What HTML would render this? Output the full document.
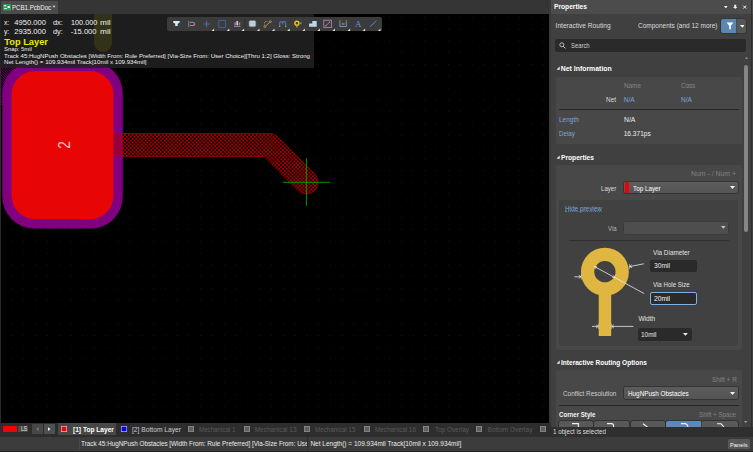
<!DOCTYPE html>
<html lang="en"><head>
<meta charset="utf-8">
<title>PCB1.PcbDoc - Properties</title>
<style>
*{box-sizing:border-box;margin:0;padding:0}
html,body{width:753px;height:452px;overflow:hidden;background:#353535}
body{position:relative;font-family:"Liberation Sans",sans-serif;font-size:6.6px;color:#e4e4e4;line-height:1;-webkit-font-smoothing:antialiased}
.a{position:absolute;white-space:nowrap}
.t{position:absolute;white-space:nowrap;line-height:10px;height:10px}
.r{text-align:right}
.b{font-weight:bold}
.g{color:#8c8c8c}
.bl{color:#7ba7d9}
#canvas{left:0;top:14px;width:548.8px;height:408.5px;background:#000;overflow:hidden}
#hud{left:0;top:0;width:314px;height:53.5px;background:rgba(33,33,33,.87);overflow:hidden}
#tb{left:166.6px;top:16.7px;width:215.5px;height:14.3px;background:#3b3b3b;border-radius:2px}
#panel{left:551px;top:14px;width:202px;height:413.3px;background:#404040;overflow:hidden}
.box{position:absolute;left:4.6px;width:186px;background:#484848;border-radius:2px}
.dd{position:absolute;background:linear-gradient(#5c5c5c,#545454);border-radius:2.5px;border:0.7px solid #343434}
.in{position:absolute;background:#2a2a2a;border-radius:2px}
.sep{position:absolute;height:1px;background:#262626}
.tri{position:absolute;width:0;height:0;border-left:2.5px solid transparent;border-right:2.5px solid transparent;border-top:3px solid #f4f4f4}
.sq{position:absolute;top:3.6px;width:6.2px;height:6.2px;background:#606060;box-shadow:inset 0 0 0 0.8px #8c8c8c}
.lt{position:absolute;top:2.2px;line-height:10px;color:#5a5a5a;font-size:6.5px;white-space:nowrap}
.cb{position:absolute;top:407px;height:8px;background:#595959;border-radius:2px 2px 0 0;box-shadow:0 0 0 0.7px #2c2c2c}
</style>
</head>
<body>

<!-- top document tab bar -->
<div class="a" style="left:0;top:0;width:753px;height:14px;background:#353535"></div>
<div class="a" style="left:1px;top:1px;width:56.5px;height:13px;background:#4b4b4b;border-radius:1px 1px 0 0"></div>
<svg class="a" style="left:3px;top:4px" width="8" height="6.5" viewBox="0 0 8 6.5"><rect width="8" height="6.5" rx="0.8" fill="#2f9e5b"></rect><rect x="1" y="1" width="2.2" height="1.4" fill="#c9f0d6"></rect><rect x="4.6" y="2" width="2.2" height="2" fill="#e8fff0"></rect><rect x="1" y="4" width="3" height="1" fill="#c9f0d6"></rect></svg>
<div class="t" style="left: 12.2px; top: 2.8px; font-size: 6.4px; color: rgb(242, 242, 242); width: auto; text-align: left; transform: scaleX(0.958); transform-origin: 0px 50%;">PCB1.PcbDoc *</div>

<!-- PCB canvas -->
<div id="canvas" class="a">
<svg class="a" style="left:0;top:0" width="548" height="409" viewBox="0 14 548 409">
  <defs>
    <pattern id="grid" patternUnits="userSpaceOnUse" x="-0.2" y="-0.25" width="11.8" height="11.78" patternTransform="translate(11.6,5.4)">
      <rect x="0" y="0" width="1" height="1" fill="#141414"></rect>
    </pattern>
    <pattern id="hatch" patternUnits="userSpaceOnUse" width="3.76" height="3.76" patternTransform="translate(0.05,0.55)">
      <path fill-rule="evenodd" fill="#a60000" d="M0 0h3.76v3.76h-3.76z M0 0h1.78v1.78h-1.78z M1.88 1.88h1.78v1.78h-1.78z"></path>
    </pattern>
    <pattern id="selh" patternUnits="userSpaceOnUse" width="1.85" height="1.85" patternTransform="rotate(45)">
      <rect width="1.85" height="0.7" fill="#800080"></rect>
    </pattern>
  </defs>
  <rect x="0" y="14" width="548" height="409" fill="#000"></rect>
  <rect x="0" y="14" width="548" height="409" fill="url(#grid)"></rect>
  <!-- dim pad above -->
  
  <!-- selection hatch at left -->
  <rect x="0" y="60" width="30" height="45" fill="url(#selh)"></rect>
  <rect x="0" y="14" width="1" height="409" fill="#2a2a2a"></rect>
  <!-- track outline -->
  <path d="M 100 145 L 269.2 145 L 306.4 182.2" fill="none" stroke="#8a0000" stroke-width="23.9" stroke-linecap="round" stroke-linejoin="round"></path>
  <path d="M 100 145 L 269.2 145 L 306.4 182.2" fill="none" stroke="#000" stroke-width="22.7" stroke-linecap="round" stroke-linejoin="round"></path>
  <!-- pad -->
  <rect x="2.3" y="61.7" width="120.5" height="166.9" rx="32" fill="#800080"></rect>
  <!-- track being routed -->
  <path d="M 100 145 L 269.2 145 L 306.4 182.2" fill="none" stroke="url(#hatch)" stroke-width="23.5" stroke-linecap="round" stroke-linejoin="round"></path>
  <rect x="11.6" y="71" width="101.9" height="148.2" rx="23.5" fill="#e80505"></rect>
  <text x="0" y="6.2" transform="translate(63.3,145) rotate(-90) scale(0.8,1)" text-anchor="middle" font-family="Liberation Sans, sans-serif" font-size="17" fill="#f6c4c4">2</text>
  <!-- cursor crosshair -->
  <path d="M282.6 182.3H330.2M306.4 158.4V205.8" stroke="#00a800" stroke-width="0.9" fill="none"></path>
</svg>

<!-- heads-up display -->
<div id="hud" class="a">
  <div class="a" style="left:93.6px;top:-10px;width:18px;height:48px;border-radius:9px;background:#323218"></div>
  <div class="t" style="left: 4.2px; top: 4.2px; font-size: 7.6px; color: rgb(244, 244, 244); word-spacing: 0px; width: auto; text-align: left; transform: scaleX(0.878); transform-origin: 0px 50%;">x:</div>
  <div class="t" style="left: 14.3px; top: 4.2px; font-size: 7.6px; color: rgb(244, 244, 244); width: auto; text-align: left;">4950.000</div>
  <div class="t" style="left: 52.8px; top: 4.2px; font-size: 7.6px; color: rgb(244, 244, 244); width: auto; text-align: left; transform: scaleX(0.976); transform-origin: 0px 50%;">dx:</div>
  <div class="t" style="left: 71.1px; width: auto; top: 4.2px; font-size: 7.6px; color: rgb(244, 244, 244); text-align: left; transform: scaleX(0.958); transform-origin: 0px 50%;">100.000</div>
  <div class="t" style="left: 100.4px; top: 4.2px; font-size: 7.6px; color: rgb(244, 244, 244); width: auto; text-align: left; transform: scaleX(1.092); transform-origin: 0px 50%;">mil</div>
  <div class="t" style="left: 4.2px; top: 12.9px; font-size: 7.6px; color: rgb(244, 244, 244); width: auto; text-align: left; transform: scaleX(0.878); transform-origin: 0px 50%;">y:</div>
  <div class="t" style="left: 14.3px; top: 12.9px; font-size: 7.6px; color: rgb(244, 244, 244); width: auto; text-align: left;">2935.000</div>
  <div class="t" style="left: 52.8px; top: 12.9px; font-size: 7.6px; color: rgb(244, 244, 244); width: auto; text-align: left; transform: scaleX(0.957); transform-origin: 0px 50%;">dy:</div>
  <div class="t" style="left: 70.8px; width: auto; top: 12.9px; font-size: 7.6px; color: rgb(244, 244, 244); text-align: left;">-15.000</div>
  <div class="t" style="left: 100.4px; top: 12.9px; font-size: 7.6px; color: rgb(244, 244, 244); width: auto; text-align: left; transform: scaleX(1.092); transform-origin: 0px 50%;">mil</div>
  <div class="t b" style="left: 4.25px; top: 22.6px; font-size: 9.3px; color: rgb(234, 234, 0); width: auto; text-align: left;">Top Layer</div>
  <div class="t" style="left: 4px; top: 29.8px; font-size: 6.1px; color: rgb(236, 236, 236); width: auto; text-align: left; transform: scaleX(0.969); transform-origin: 0px 50%;">Snap: 5mil</div>
  <div class="t" style="left: 4px; top: 36.7px; font-size: 6.15px; color: rgb(240, 240, 240); width: auto; text-align: left; transform: scaleX(0.985); transform-origin: 0px 50%;">Track 45:HugNPush Obstacles [Width From: Rule Preferred] [Via-Size From: User Choice][Thru 1:2] Gloss: Strong</div>
  <div class="t" style="left: 4px; top: 43.3px; font-size: 6.15px; color: rgb(240, 240, 240); width: auto; text-align: left;">Net Length() = 109.934mil Track[10mil x 109.934mil]</div>
</div>
</div>

<!-- active bar toolbar -->
<div id="tb" class="a"></div>
<svg class="a" style="left:166.5px;top:16px" width="216" height="15.5" viewBox="166.5 16 216 15.5">
  <!-- filter -->
  <path d="M172.7 21h6.5v1.5l-2 1.2v2.4h-2.5v-2.4l-2-1.2z" fill="#d6ebf4"></path>
  <!-- magnet -->
  <path d="M189.4 22.4h3.2a1.55 1.55 0 0 1 1.55 1.55" fill="none" stroke="#5b8bd6" stroke-width="1.2"></path>
  <path d="M194.15 23.95a1.55 1.55 0 0 1-1.55 1.55h-3.2" fill="none" stroke="#e0707a" stroke-width="1.2"></path>
  <path d="M188.2 21.2v5.6" stroke="#b8dcc4" stroke-width="0.7" stroke-dasharray="1 0.5"></path>
  <!-- plus -->
  <path d="M203 24h6.4M206.2 20.8v6.4" stroke="#4c76b6" stroke-width="0.9"></path>
  <!-- selection rect -->
  <rect x="218.3" y="20.6" width="6.6" height="6.8" fill="none" stroke="#4866a0" stroke-width="0.8"></rect>
  <!-- align -->
  <path d="M233.4 26.4h6.6" stroke="#6aa0e0" stroke-width="0.9"></path>
  <rect x="235.9" y="21" width="1.6" height="4.3" fill="#a8d8f0"></rect>
  <rect x="233.9" y="22.4" width="1.5" height="2.9" fill="#e06a6a"></rect><rect x="238.2" y="22.4" width="1.5" height="2.9" fill="#e06a6a"></rect>
  <!-- separator -->
  <path d="M244.5 18.4v10.6" stroke="#2a2a2a" stroke-width="0.8"></path>
  <!-- chip -->
  <rect x="248.8" y="20.8" width="6.2" height="5.8" rx="0.6" fill="#cfe0e6"></rect>
  <path d="M248 22.2h7.8M248 23.7h7.8M248 25.2h7.8M250.6 20v7.4M253.2 20v7.4" stroke="#a9bcc4" stroke-width="0.5"></path>
  <!-- route -->
  <path d="M265.2 26l4.4-4" fill="none" stroke="#7a9ad0" stroke-width="0.9"></path>
  <path d="M264 22.2v3M264.6 21.6h3.4" fill="none" stroke="#d7a52c" stroke-width="0.7" stroke-dasharray="0.8 0.6"></path>
  <circle cx="264.4" cy="26.6" r="1" fill="none" stroke="#d7a52c" stroke-width="0.7"></circle><circle cx="270" cy="21.6" r="0.9" fill="none" stroke="#d7a52c" stroke-width="0.7"></circle>
  <!-- tuning -->
  <path d="M279.2 25.8V23.3a1.5 1.7 0 0 1 3 0v1.2m0-1.2a1.5 1.7 0 0 1 3 0V25.8" fill="none" stroke="#4a78c0" stroke-width="1.1"></path>
  <circle cx="279.2" cy="26.2" r="0.75" fill="#d7a52c"></circle><circle cx="285.2" cy="26.2" r="0.75" fill="#d7a52c"></circle>
  <!-- via/key -->
  <circle cx="296.4" cy="23.3" r="2" fill="none" stroke="#e8c21e" stroke-width="1.5"></circle>
  <path d="M296.4 25.8v1.8" stroke="#e09434" stroke-width="1.2"></path><rect x="299" y="22.4" width="2" height="1.7" fill="#49b04a"></rect>
  <!-- polygon stairs -->
  <path d="M308.6 26.7v-3.3h3.2v-2.4h4.4v5.7z" fill="#bcd9ec"></path>
  <!-- pink square -->
  <rect x="323.3" y="20.2" width="7.6" height="7.4" fill="none" stroke="#b97fbd" stroke-width="0.85"></rect>
  <path d="M325.4 25.6l3.6-3.3" stroke="#6a93cc" stroke-width="0.9"></path><circle cx="325.4" cy="25.7" r="0.7" fill="#d7a52c"></circle><circle cx="329" cy="22.3" r="0.7" fill="#d7a52c"></circle>
  <!-- dimension -->
  <path d="M339.4 21.6v5h6.4v-5" fill="none" stroke="#78aee6" stroke-width="0.8"></path>
  <rect x="341.2" y="22.8" width="2.8" height="2.4" fill="#707070"></rect><circle cx="339.5" cy="20.8" r="0.6" fill="#d7a52c"></circle><circle cx="345.7" cy="20.8" r="0.6" fill="#d7a52c"></circle>
  <!-- A text -->
  <text x="357.7" y="27" text-anchor="middle" font-family="Liberation Serif, serif" font-size="9" fill="#5b98de">A</text>
  <!-- line -->
  <path d="M369.6 26.6l6.2-5.6" stroke="#4d8ad8" stroke-width="1"></path>
  <!-- dropdown corner marks -->
  <g fill="#e8e8e8">
    <path d="M213.6 28.6v2.3h-2.5z"></path><path d="M228.8 28.6v2.3h-2.5z"></path><path d="M243.6 28.6v2.3h-2.5z"></path><path d="M259 28.6v2.3h-2.5z"></path><path d="M274 28.6v2.3h-2.5z"></path><path d="M289.2 28.6v2.3h-2.5z"></path><path d="M304.4 28.6v2.3h-2.5z"></path><path d="M319.4 28.6v2.3h-2.5z"></path><path d="M334.4 28.6v2.3h-2.5z"></path><path d="M349.6 28.6v2.3h-2.5z"></path><path d="M364.6 28.6v2.3h-2.5z"></path><path d="M380 28.6v2.3h-2.5z"></path>
  </g>
</svg>

<!-- splitter + Properties panel header -->
<div class="a" style="left:548.8px;top:0;width:2.4px;height:436.5px;background:#383838"></div>
<div class="a" style="left:551px;top:0;width:202px;height:14px;background:#4c4c4c"></div>
<div class="t b" style="left: 554px; top: 2px; font-size: 6.9px; color: rgb(255, 255, 255); width: auto; text-align: left; transform: scaleX(0.965); transform-origin: 0px 50%;">Properties</div>
<svg class="a" style="left:724.2px;top:5.5px" width="3.6" height="2.6" viewBox="0 0 3.6 2.6"><polygon points="0,0 3.6,0 1.8,2.6" fill="#f0f0f0"></polygon></svg>
<svg class="a" style="left:731px;top:3px" width="20" height="8" viewBox="0 0 20 8"><path d="M3.2 1.8h2v2.4h0.9v0.8H4.6V6h-0.8V5H2.3V4.2h0.9z" fill="#f0f0f0"></path><path d="M12.2 2.6l3 3M15.2 2.6l-3 3" stroke="#f0f0f0" stroke-width="1"></path></svg>

<div class="a" style="left:750.8px;top:0;width:1.6px;height:427px;background:#2f2f2f;z-index:3"></div>
<!-- Properties panel body -->
<div id="panel" class="a">
  <div class="t" style="left: 4.6px; top: 7px; font-size: 6.6px; color: rgb(220, 220, 220); width: auto; text-align: left;">Interactive Routing</div>
  <div class="t" style="left: 86.8px; width: auto; top: 7px; font-size: 6.6px; color: rgb(220, 220, 220); text-align: left; transform: scaleX(0.986); transform-origin: 0px 50%;">Components (and 12 more)</div>
  <div class="a" style="left:170.2px;top:5px;width:16px;height:14.2px;background:#5c86b2;border-radius:2px 0 0 2px;box-shadow:0 0 0 0.6px #2c2c2c"></div>
  <svg class="a" style="left:174.6px;top:8.4px" width="8" height="8" viewBox="0 0 8 8"><path d="M0.6 0.6h6.8L4.8 3.8v3.4H3.2V3.8z" fill="#fff"></path></svg>
  <div class="a" style="left:186.2px;top:5px;width:8.8px;height:14.2px;background:#565656;border-radius:0 2px 2px 0;box-shadow:0 0 0 0.6px #2c2c2c"></div>
  <svg class="a" style="left:188.5px;top:10.8px" width="4.6" height="2.8" viewBox="0 0 4.6 2.8"><polygon points="0,0 4.6,0 2.3,2.8" fill="#f4f4f4"></polygon></svg>

  <!-- search -->
  <div class="in" style="left:4.4px;top:25.2px;width:190.8px;height:12.6px"></div>
  <svg class="a" style="left:8.4px;top:28.2px" width="7" height="7" viewBox="0 0 7 7"><circle cx="2.8" cy="2.8" r="2" fill="none" stroke="#d8d8d8" stroke-width="0.8"></circle><path d="M4.3 4.3L6.4 6.4" stroke="#d8d8d8" stroke-width="0.9"></path></svg>
  <div class="t" style="left: 19.9px; top: 26.6px; font-size: 6.6px; color: rgb(208, 208, 208); width: auto; text-align: left; transform: scaleX(0.89); transform-origin: 0px 50%;">Search</div>

  <!-- scrollbar -->
  <div class="a" style="left:193.1px;top:51px;width:4.1px;height:167px;background:#868686;border-radius:2px"></div>
  <svg class="a" style="left:193.6px;top:43.4px" width="3" height="1.8" viewBox="0 0 3 1.8"><polygon points="0,1.8 1.5,0 3,1.8" fill="#a0a0a0"></polygon></svg>
  <svg class="a" style="left:193.4px;top:406.8px" width="3.4" height="2" viewBox="0 0 3.4 2"><polygon points="0,0 3.4,0 1.7,2" fill="#a0a0a0"></polygon></svg>

  <!-- Net Information -->
  <svg class="a" style="left:4.6px;top:51.7px" width="4.4" height="4.4" viewBox="0 0 4 4"><path d="M3.4 0.4v3H0.4z" fill="#e8e8e8"></path></svg>
  <div class="t b" style="left: 9.8px; top: 49.6px; font-size: 6.9px; color: rgb(255, 255, 255); width: auto; text-align: left;">Net Information</div>
  <div class="box" style="top:62.8px;height:67.5px"></div>
  <div class="t g" style="left: 72.7px; top: 66.8px; font-size: 6.6px; color: rgb(133, 133, 133); width: auto; text-align: left; transform: scaleX(0.961); transform-origin: 0px 50%;">Name</div>
  <div class="t g" style="left: 129.9px; top: 66.8px; font-size: 6.6px; color: rgb(133, 133, 133); width: auto; text-align: left; transform: scaleX(0.873); transform-origin: 0px 50%;">Class</div>
  <div class="t" style="left: 55.3px; width: auto; top: 80.6px; color: rgb(220, 220, 220); text-align: left; transform: scaleX(0.974); transform-origin: 0px 50%;">Net</div>
  <div class="t bl" style="left: 72.7px; top: 80.6px; font-size: 6.6px; width: auto; text-align: left;">N/A</div>
  <div class="t bl" style="left: 129.9px; top: 80.6px; font-size: 6.6px; width: auto; text-align: left;">N/A</div>
  <div class="sep" style="left:8px;top:95.2px;width:179.6px"></div>
  <div class="t bl" style="left: 8.2px; top: 101.3px; font-size: 6.6px; width: auto; text-align: left; transform: scaleX(0.982); transform-origin: 0px 50%;">Length</div>
  <div class="t" style="left: 72.7px; top: 101.3px; font-size: 6.6px; color: rgb(237, 237, 237); width: auto; text-align: left; transform: scaleX(1.036); transform-origin: 0px 50%;">N/A</div>
  <div class="t bl" style="left: 8.2px; top: 115px; font-size: 6.6px; width: auto; text-align: left; transform: scaleX(0.937); transform-origin: 0px 50%;">Delay</div>
  <div class="t" style="left: 72.7px; top: 115px; font-size: 6.6px; color: rgb(237, 237, 237); width: auto; text-align: left;">16.371ps</div>

  <!-- Properties -->
  <svg class="a" style="left:4.6px;top:141.3px" width="4.4" height="4.4" viewBox="0 0 4 4"><path d="M3.4 0.4v3H0.4z" fill="#e8e8e8"></path></svg>
  <div class="t b" style="left: 9.8px; top: 139.2px; font-size: 6.9px; color: rgb(255, 255, 255); width: auto; text-align: left; transform: scaleX(0.965); transform-origin: 0px 50%;">Properties</div>
  <div class="box" style="top:150.9px;height:185px"></div>
  <div class="t g" style="left: 139.9px; width: auto; top: 155.4px; font-size: 6.6px; color: rgb(130, 130, 130); text-align: left; transform: scaleX(1.045); transform-origin: 0px 50%;">Num - / Num +</div>
  <div class="t" style="left: 50.1px; width: auto; top: 170px; color: rgb(220, 220, 220); text-align: left; transform: scaleX(0.921); transform-origin: 0px 50%;">Layer</div>
  <div class="dd" style="left:72.4px;top:166.5px;width:115.2px;height:13.8px"></div>
  <div class="a" style="left:73.6px;top:168px;width:4.8px;height:11.2px;background:#f00000;border-radius:1px"></div>
  <div class="t" style="left: 82px; top: 169.6px; font-size: 6.6px; color: rgb(255, 255, 255); width: auto; text-align: left; transform: scaleX(0.956); transform-origin: 0px 50%;">Top Layer</div>
  <svg class="a" style="left:179.2px;top:172.2px" width="5" height="3" viewBox="0 0 5 3"><polygon points="0,0 5,0 2.5,3" fill="#f4f4f4"></polygon></svg>

  <!-- preview sub-box -->
  <div class="a" style="left:8.3px;top:186.2px;width:179px;height:145.5px;background:#414141;border-radius:2px"></div>
  <div class="t" style="left: 13.9px; top: 189.9px; font-size: 6.6px; color: rgb(123, 167, 217); border-bottom: 0.6px dotted rgb(95, 131, 173); height: 8.4px; line-height: 9.2px; width: auto; text-align: left; transform: scaleX(0.97); transform-origin: 0px 50%;">Hide preview</div>
  <div class="t" style="left: 56.9px; width: auto; top: 210.2px; color: rgb(178, 178, 178); text-align: left; transform: scaleX(0.923); transform-origin: 0px 50%;">Via</div>
  <div class="dd" style="left:72.4px;top:207px;width:105.2px;height:13.6px;background:#4e4e4e;border-color:#3b3b3b"></div>
  <svg class="a" style="left:170px;top:212.4px" width="4.6" height="2.7" viewBox="0 0 4.6 2.7"><polygon points="0,0 4.6,0 2.3,2.7" fill="#c4c4c4"></polygon></svg>
  <div class="sep" style="left:18.2px;top:226.2px;width:159.4px;background:#2e2e2e"></div>

  <!-- via graphic -->
  <svg class="a" style="left:20px;top:230px" width="100" height="100" viewBox="571 244 100 100">
    <rect x="598.7" y="290" width="12.5" height="46" fill="#deb640"></rect>
    <circle cx="604.9" cy="271.7" r="17.3" fill="none" stroke="#deb640" stroke-width="13.3"></circle>
    <g stroke="#f2f2f2" stroke-width="0.75" fill="none">
      <path d="M574.4 276.8h6"></path><path d="M581 276.8l-2.2-1.6M581 276.8l-2.2 1.5"></path><path d="M581.4 274v5.6" stroke-width="0.5"></path>
      <path d="M594.6 266.6L644.2 293.6"></path><path d="M594.6 266.6l2.6 0.2M594.6 266.6l1.2 2.2"></path><path d="M615 277.6l-2.6-0.2M615 277.6l-1.2-2.2"></path>
      <path d="M629.6 266.6l14.2-2.8"></path><path d="M629.6 266.6l2-1.8M629.6 266.6l2.4 1"></path><path d="M629.4 264v5.2" stroke-width="0.5"></path>
      <path d="M592 326.4h5.6"></path><path d="M598.4 326.4l-2.2-1.5M598.4 326.4l-2.2 1.5"></path><path d="M598.6 323.6v5.4" stroke-width="0.5"></path>
      <path d="M612 326.4h21.4"></path><path d="M611.6 326.4l2.2-1.5M611.6 326.4l2.2 1.5"></path><path d="M611.3 323.6v5.4" stroke-width="0.5"></path>
    </g>
  </svg>
  <div class="t" style="left: 102.1px; top: 234.1px; font-size: 6.6px; color: rgb(224, 224, 224); width: auto; text-align: left; transform: scaleX(0.966); transform-origin: 0px 50%;">Via Diameter</div>
  <div class="in" style="left:99.2px;top:245.6px;width:46.8px;height:12.8px"></div>
  <div class="t" style="left: 102.6px; top: 247.3px; font-size: 6.6px; color: rgb(230, 230, 230); width: auto; text-align: left; transform: scaleX(1.021); transform-origin: 0px 50%;">30mil</div>
  <div class="t" style="left: 102.1px; top: 265.8px; font-size: 6.6px; color: rgb(224, 224, 224); width: auto; text-align: left; transform: scaleX(0.93); transform-origin: 0px 50%;">Via Hole Size</div>
  <div class="in" style="left:99.2px;top:278px;width:46.8px;height:13px;border:0.8px solid #7fb0e6"></div>
  <div class="t" style="left: 102.6px; top: 279.6px; font-size: 6.6px; color: rgb(244, 244, 244); width: auto; text-align: left; transform: scaleX(1.021); transform-origin: 0px 50%;">20mil</div>
  <div class="t" style="left: 87.4px; top: 299.6px; font-size: 6.6px; color: rgb(224, 224, 224); width: auto; text-align: left;">Width</div>
  <div class="in" style="left:87.4px;top:314.2px;width:53.2px;height:12.8px"></div>
  <div class="t" style="left: 90.4px; top: 315.6px; font-size: 6.6px; color: rgb(230, 230, 230); width: auto; text-align: left; transform: scaleX(0.983); transform-origin: 0px 50%;">10mil</div>
  <svg class="a" style="left:132px;top:319.4px" width="4.8" height="2.8" viewBox="0 0 4.8 2.8"><polygon points="0,0 4.8,0 2.4,2.8" fill="#f4f4f4"></polygon></svg>

  <!-- Interactive Routing Options -->
  <svg class="a" style="left:4.6px;top:345.7px" width="4.4" height="4.4" viewBox="0 0 4 4"><path d="M3.4 0.4v3H0.4z" fill="#e8e8e8"></path></svg>
  <div class="t b" style="left: 9.8px; top: 343.6px; font-size: 6.9px; color: rgb(255, 255, 255); width: auto; text-align: left; transform: scaleX(0.95); transform-origin: 0px 50%;">Interactive Routing Options</div>
  <div class="box" style="top:355.8px;height:61px"></div>
  <div class="t g" style="left: 160.6px; width: auto; top: 360.8px; font-size: 6.6px; color: rgb(130, 130, 130); text-align: left; transform: scaleX(0.973); transform-origin: 0px 50%;">Shift + R</div>
  <div class="t" style="left: 12px; top: 374.6px; font-size: 6.6px; color: rgb(207, 207, 207); width: auto; text-align: left; transform: scaleX(0.969); transform-origin: 0px 50%;">Conflict Resolution</div>
  <div class="dd" style="left:72.4px;top:372.2px;width:115.2px;height:13.8px"></div>
  <div class="t" style="left: 76.5px; top: 374.6px; font-size: 6.6px; color: rgb(255, 255, 255); width: auto; text-align: left; transform: scaleX(0.963); transform-origin: 0px 50%;">HugNPush Obstacles</div>
  <svg class="a" style="left:179.2px;top:378px" width="5" height="3" viewBox="0 0 5 3"><polygon points="0,0 5,0 2.5,3" fill="#f4f4f4"></polygon></svg>
  <div class="sep" style="left:8px;top:390.8px;width:179.6px"></div>
  <div class="t" style="left: 8.2px; top: 395.6px; font-size: 6.6px; color: rgb(244, 244, 244); font-weight: bold; width: auto; text-align: left; transform: scaleX(0.928); transform-origin: 0px 50%;">Corner Style</div>
  <div class="t g" style="left: 148.4px; width: auto; top: 395.6px; font-size: 6.6px; color: rgb(130, 130, 130); text-align: left; transform: scaleX(0.939); transform-origin: 0px 50%;">Shift + Space</div>
  <div class="cb" style="left:8.2px;width:34px"></div>
  <div class="cb" style="left:43.3px;width:35.2px"></div>
  <div class="cb" style="left:79.8px;width:34.6px"></div>
  <div class="cb" style="left:115px;width:35.6px;background:#5c89ba"></div>
  <div class="cb" style="left:151.4px;width:35.4px"></div>
  <svg class="a" style="left:8px;top:407px" width="180" height="6" viewBox="0 0 180 6"><g fill="none" stroke="#f0f0f0" stroke-width="1.1"><path d="M13 2.6h6.4v3.4"></path><path d="M48 2.6h4.6q2 0 2 2.4v1"></path><path d="M84 2.8l4.4 3.2"></path><path d="M122 2.6h4.4q2.2 0.6 2.6 3.4"></path><path d="M158 2.8h4.2l2.6 3.2"></path></g></svg>
</div>

<!-- panel status strip -->
<div class="a" style="left:551px;top:427.3px;width:202px;height:9.4px;background:#2f2f2f"></div>
<div class="t" style="left: 553.4px; top: 426.6px; font-size: 6.6px; color: rgb(222, 222, 222); width: auto; text-align: left; transform: scaleX(0.943); transform-origin: 0px 50%;">1 object is selected</div>

<!-- layer tabs -->
<div class="a" style="left:0;top:422.5px;width:551px;height:14px;background:#2d2d2d;overflow:hidden">
  <div class="a" style="left:2.9px;top:3.2px;width:14.3px;height:6.3px;background:#f80000"></div>
  <div class="a" style="left:18.1px;top:3.1px;width:9.6px;height:6.7px;background:#4a4a4a"></div>
  <div class="t" style="left: 20.5px; top: 1.6px; font-size: 6.4px; color: rgb(232, 232, 232); width: auto; text-align: left; transform: scaleX(0.805); transform-origin: 0px 50%;">LS</div>
  <div class="a" style="left:32.2px;top:1.5px;width:11px;height:10.3px;background:#484848;border-radius:1px"></div>
  <div class="a" style="left:43.7px;top:1.5px;width:11.2px;height:10.3px;background:#505050;border-radius:1px"></div>
  <svg class="a" style="left:32.2px;top:1.5px" width="23" height="10.3" viewBox="0 0 23 10.3"><path d="M6.6 3.2v3.8L4.2 5.1z" fill="#7c7c7c"></path><path d="M16 3.2v3.8L18.5 5.1z" fill="#f4f4f4"></path></svg>
  <div class="a" style="left:57.9px;top:0.6px;width:58.2px;height:12.3px;background:#474747"></div>
  <div class="sq" style="left:60.7px;background:#f00000;box-shadow:inset 0 0 0 0.7px #f0b0b0"></div>
  <div class="lt b" style="left: 72.6px; color: rgb(255, 255, 255); font-size: 6.8px; width: auto; text-align: left; transform: scaleX(0.97); transform-origin: 0px 50%;">[1] Top Layer</div>
  <div class="sq" style="left:120.8px;background:#0000f0;box-shadow:inset 0 0 0 0.7px #b0b0f0"></div>
  <div class="lt" style="left: 132px; color: rgb(205, 205, 205); font-size: 6.7px; width: auto; text-align: left;">[2] Bottom Layer</div>
  <div class="sq" style="left:187.8px"></div><div class="lt" style="left: 199px; width: auto; text-align: left; transform: scaleX(0.95); transform-origin: 0px 50%;">Mechanical 1</div>
  <div class="sq" style="left:243.6px"></div><div class="lt" style="left: 254.7px; width: auto; text-align: left;">Mechanical 13</div>
  <div class="sq" style="left:304.0px"></div><div class="lt" style="left: 315px; width: auto; text-align: left; transform: scaleX(0.966); transform-origin: 0px 50%;">Mechanical 15</div>
  <div class="sq" style="left:363.6px"></div><div class="lt" style="left: 374.7px; width: auto; text-align: left; transform: scaleX(0.976); transform-origin: 0px 50%;">Mechanical 16</div>
  <div class="sq" style="left:423.2px"></div><div class="lt" style="left: 434.8px; width: auto; text-align: left; transform: scaleX(0.977); transform-origin: 0px 50%;">Top Overlay</div>
  <div class="sq" style="left:476.2px"></div><div class="lt" style="left: 487.6px; width: auto; text-align: left;">Bottom Overlay</div>
  <div class="sq" style="left:540.0px"></div>
</div>

<!-- status bar -->
<div class="a" style="left:0;top:436.5px;width:753px;height:15.5px;background:#3c3c3c"></div>
<div class="a" style="left:0;top:437px;width:307px;height:15px;overflow:hidden">
  <div class="t" style="left: 81.3px; top: 2.4px; font-size: 6.5px; color: rgb(236, 236, 236); width: auto; text-align: left; transform: scaleX(0.973); transform-origin: 0px 50%;">Track 45:HugNPush Obstacles [Width From: Rule Preferred] [Via-Size From: User Choice][Thru 1:2] Gloss: Strong</div>
</div>
<div class="a" style="left:307px;top:437px;width:241px;height:15px;background:#3c3c3c;border-left:1px solid #2c2c2c"></div>
<div class="t" style="left: 310.4px; top: 439.4px; font-size: 6.5px; color: rgb(236, 236, 236); width: auto; text-align: left;">Net Length() = 109.934mil Track[10mil x 109.934mil]</div>
<div class="a" style="left:727.6px;top:439.4px;width:22px;height:9.4px;background:#575757;border-radius:1.5px"></div>
<div class="t" style="left: 729.9px; width: auto; text-align: left; top: 439.6px; font-size: 6.2px; color: rgb(246, 246, 246); transform: scaleX(0.935); transform-origin: 0px 50%;">Panels</div>

<div class="a" style="left:0;top:450.8px;width:753px;height:1.2px;background:#232323"></div>
<div class="a" style="left:78.6px;top:438px;width:0.8px;height:12px;background:#4a4a4a"></div>


</body></html>
